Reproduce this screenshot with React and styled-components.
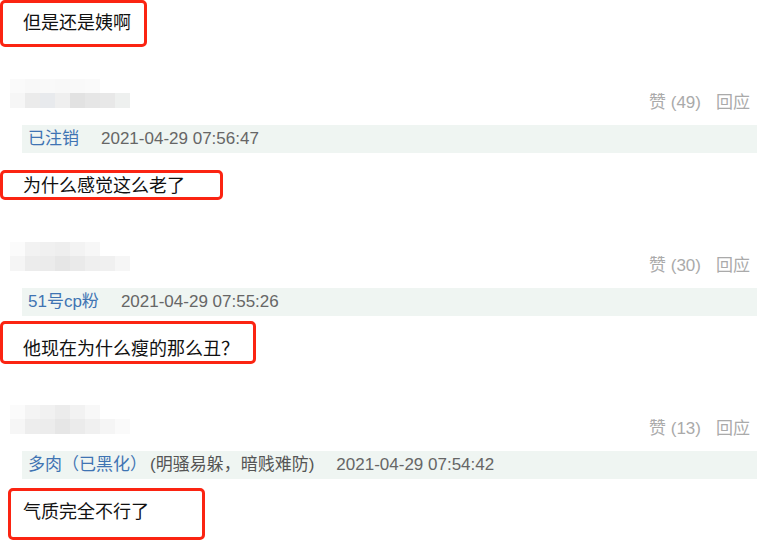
import React from "react";
import styled, { createGlobalStyle } from "styled-components";

const GlobalStyle = createGlobalStyle`
  body {
    margin: 0;
    background: #fff;
    font-family: "Liberation Sans", "Noto Sans CJK SC", sans-serif;
  }
`;

const Page = styled.div`
  width: 774px;
  height: 550px;
  overflow: hidden;
  background: #fff;
`;

const Body = styled.div`
  position: relative;
  margin-top: ${(p) => p.top}px;
  padding-left: 23px;
  font-size: 18px;
  line-height: 30px;
  color: #111;
`;

const Mark = styled.div`
  position: absolute;
  top: ${(p) => p.y}px;
  left: ${(p) => p.x}px;
  width: ${(p) => p.w}px;
  height: ${(p) => p.h}px;
  box-sizing: border-box;
  border: 3px solid #fb2412;
  border-radius: 5px;
  pointer-events: none;
`;

const Header = styled.div`
  display: flex;
  justify-content: space-between;
  align-items: flex-end;
  height: 32px;
  margin-top: 41px;
  padding: 0 24px 0 10px;
`;

const Mosaic = styled.div`
  align-self: flex-start;
  display: flex;
  flex-direction: column;
`;

const MosaicRow = styled.div`
  display: flex;
  height: ${(p) => p.h}px;
`;

const Cell = styled.div`
  width: 15px;
  background: ${(p) => p.c};
`;

const Actions = styled.div`
  display: flex;
  gap: 15px;
  font-size: 17px;
  line-height: 20px;
  margin-bottom: -2px;
  color: #aaa;
`;

const Quote = styled.div`
  display: flex;
  align-items: center;
  gap: 22px;
  height: 28px;
  line-height: 28px;
  margin: 14px 17px 0 22px;
  padding-left: 6px;
  background: #eff5f2;
  font-size: 17px;
  color: #666;
  white-space: nowrap;
`;

const Author = styled.span`
  color: #3f74b3;
`;

const Sign = styled.span`
  margin-left: 3px;
  color: #555;
`;

const mosaics = [
  [
    ["#fafafa", "#f8f8f8", "#f9f9f9", "#f8f8f8", "#f9f9f9", "#fafafa"],
    ["#f6f6f6", "#ebebeb", "#e8eaed", "#efefef", "#e2e2e2", "#e6e6e6", "#e8e8e8", "#eef0ef"],
  ],
  [
    ["#fbfbfb", "#f2f2f2", "#f0f0f0", "#eeeeee", "#f3f3f3", "#f7f7f7"],
    ["#f5f5f5", "#ececec", "#ebebeb", "#e6e6e6", "#eaeaea", "#efefef", "#f0f0f0", "#f6f6f6"],
  ],
  [
    ["#fbfbfb", "#f4f4f4", "#f1f1f1", "#ececec", "#f2f2f2", "#f8f8f8"],
    ["#f6f6f6", "#ededed", "#ececec", "#e6e6e6", "#ebebeb", "#f0f0f0", "#f5f5f5", "#fafafa"],
  ],
];

const comments = [
  {
    likes: 49,
    author: "已注销",
    time: "2021-04-29 07:56:47",
    text: "为什么感觉这么老了",
    mark: { x: 0, y: -1, w: 223, h: 30 },
  },
  {
    likes: 30,
    author: "51号cp粉",
    time: "2021-04-29 07:55:26",
    text: "他现在为什么瘦的那么丑？",
    mark: { x: 0, y: -13, w: 256, h: 43 },
  },
  {
    likes: 13,
    author: "多肉（已黑化）",
    sign: "(明骚易躲，暗贱难防)",
    time: "2021-04-29 07:54:42",
    text: "气质完全不行了",
    mark: { x: 8, y: -9, w: 197, h: 52 },
  },
];

const Comment = ({ c, mosaic }) => (
  <>
    <Header>
      <Mosaic>
        <MosaicRow h={14}>
          {mosaic[0].map((col, i) => (
            <Cell key={i} c={col} />
          ))}
        </MosaicRow>
        <MosaicRow h={15}>
          {mosaic[1].map((col, i) => (
            <Cell key={i} c={col} />
          ))}
        </MosaicRow>
      </Mosaic>
      <Actions>
        <span>赞 ({c.likes})</span>
        <span>回应</span>
      </Actions>
    </Header>
    <Quote>
      <span>
        <Author>{c.author}</Author>
        {c.sign && <Sign>{c.sign}</Sign>}
      </span>
      <span>{c.time}</span>
    </Quote>
    <Body top={18}>
      {c.text}
      <Mark {...c.mark} />
    </Body>
  </>
);

export default function App() {
  return (
    <Page>
      <GlobalStyle />
      <Body top={8}>
        但是还是姨啊
        <Mark x={0} y={-8} w={147} h={47} />
      </Body>
      {comments.map((c, i) => (
        <Comment key={i} c={c} mosaic={mosaics[i]} />
      ))}
    </Page>
  );
}
